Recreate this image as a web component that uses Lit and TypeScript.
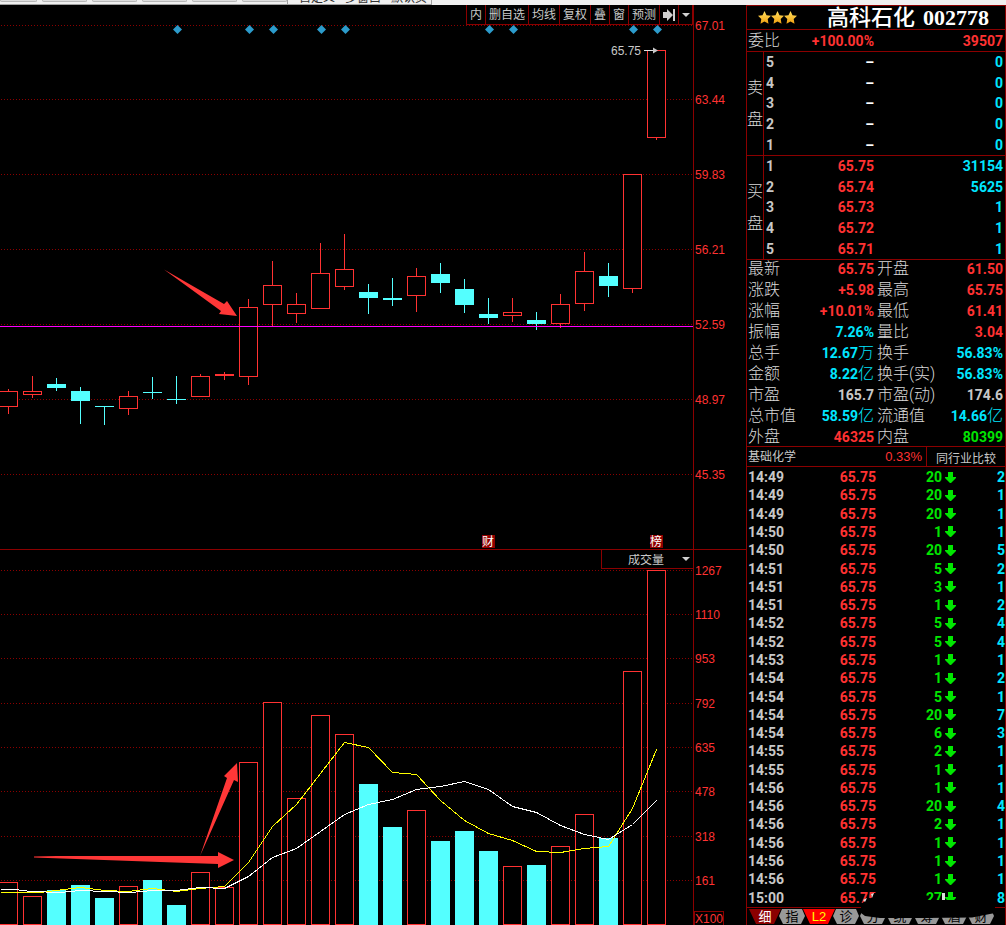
import { LitElement, html, svg, css } from "lit";
import { customElement } from "lit/decorators.js";
import { classMap } from "lit/directives/class-map.js";

type Candle = [high: number, top: number, bottom: number, low: number, up: 0 | 1, volTop: number];

/* One entry per trading day: wick and body rows of the price pane, then the top of the volume bar. */
const CANDLES: Candle[] = [
  [389, 391, 407, 414, 1, 882],
  [376, 391, 395, 398, 1, 896],
  [378, 384, 388, 391, 0, 890],
  [387, 391, 401, 424, 0, 885],
  [406, 406, 407, 425, 0, 898],
  [391, 396, 409, 415, 1, 886],
  [377, 392, 393, 399, 0, 880],
  [376, 399, 400, 404, 0, 905],
  [374, 376, 397, 397, 1, 872],
  [372, 374, 376, 380, 1, 887],
  [299, 307, 377, 385, 1, 762],
  [261, 285, 305, 326, 1, 702],
  [293, 304, 314, 323, 1, 798],
  [243, 273, 309, 309, 1, 715],
  [234, 269, 287, 290, 1, 734],
  [284, 292, 298, 314, 0, 784],
  [278, 298, 300, 306, 0, 827],
  [268, 276, 296, 312, 1, 810],
  [263, 274, 283, 293, 0, 841],
  [279, 289, 305, 313, 0, 831],
  [298, 314, 318, 324, 0, 851],
  [298, 312, 316, 322, 1, 866],
  [312, 320, 324, 330, 0, 865],
  [294, 304, 324, 328, 1, 846],
  [252, 271, 304, 311, 1, 814],
  [263, 276, 286, 297, 0, 838],
  [174, 174, 289, 293, 1, 671],
  [50, 50, 138, 140, 1, 570],
];

const PRICE_GRID: [number, string][] = [
  [25, "67.01"], [99, "63.44"], [174, "59.83"], [249, "56.21"],
  [324, "52.59"], [399, "48.97"], [474, "45.35"],
];
const VOLUME_GRID: [number, string][] = [
  [570, "1267"], [614, "1110"], [658, "953"], [703, "792"],
  [747, "635"], [791, "478"], [836, "318"], [880, "161"],
];
const EVENTS = [177, 249, 273, 321, 345, 489, 513, 633, 657];

const MA5 =
  "0,892 40,892 55,890 80,887 104,890 128,891 152,888 176,891 200,888 224,886 248,862 272,826 296,804 320,773 344,742 368,747 392,772 416,774 440,800 464,820 488,833 512,840 536,851 560,852 584,848 608,846 632,808 656,749";
const MA10 =
  "0,889 15,889 30,891 60,892 80,890 104,891 130,892 152,890 176,890 200,887 224,888 248,876 272,857 296,848 320,831 344,814 368,804 392,799 416,789 440,786 464,781 488,789 512,806 536,812 560,825 584,834 608,839 632,824 656,800";

const TOOLS = ["内", "删自选", "均线", "复权", "叠", "窗", "预测"];

const SELL = [["5", "–", "0"], ["4", "–", "0"], ["3", "–", "0"], ["2", "–", "0"], ["1", "–", "0"]];
const BUY = [
  ["1", "65.75", "31154"], ["2", "65.74", "5625"], ["3", "65.73", "1"],
  ["4", "65.72", "1"], ["5", "65.71", "1"],
];

type Stat = [label: string, value: string, unit: string, tone: string];
const STATS: Stat[] = [
  ["最新", "65.75", "", "red"], ["开盘", "61.50", "", "red"],
  ["涨跌", "+5.98", "", "red"], ["最高", "65.75", "", "red"],
  ["涨幅", "+10.01%", "", "red"], ["最低", "61.41", "", "red"],
  ["振幅", "7.26%", "", "cyan"], ["量比", "3.04", "", "red"],
  ["总手", "12.67", "万", "cyan"], ["换手", "56.83%", "", "cyan"],
  ["金额", "8.22", "亿", "cyan"], ["换手(实)", "56.83%", "", "cyan"],
  ["市盈", "165.7", "", "plain"], ["市盈(动)", "174.6", "", "plain"],
  ["总市值", "58.59", "亿", "cyan"], ["流通值", "14.66", "亿", "cyan"],
  ["外盘", "46325", "", "red"], ["内盘", "80399", "", "green"],
];

const TRADES: [string, number, number][] = [
  ["14:49", 20, 2], ["14:49", 20, 1], ["14:49", 20, 1], ["14:50", 1, 1],
  ["14:50", 20, 5], ["14:51", 5, 2], ["14:51", 3, 1], ["14:51", 1, 2],
  ["14:52", 5, 4], ["14:52", 5, 4], ["14:53", 1, 1], ["14:54", 1, 2],
  ["14:54", 5, 1], ["14:54", 20, 7], ["14:54", 6, 3], ["14:55", 2, 1],
  ["14:55", 1, 1], ["14:56", 1, 1], ["14:56", 20, 4], ["14:56", 2, 1],
  ["14:56", 1, 1], ["14:56", 1, 1], ["14:56", 1, 1], ["15:00", 27, 8],
];

const TABS = ["细", "指", "L2", "诊", "分", "统", "筹", "酒", "财"];

const shared = css`
  :host {
    display: block;
    box-sizing: border-box;
  }
  *,
  *::before {
    box-sizing: border-box;
  }
  button,
  select {
    margin: 0;
    border: 0;
    padding: 0;
    border-radius: 0;
    background: none;
    color: inherit;
    font: inherit;
    appearance: none;
    cursor: pointer;
  }
`;

const gridLine = (y: number) =>
  svg`<line class="grid" x1="1" x2="100%" y1=${y + 0.5} y2=${y + 0.5}></line>`;

@customElement("chart-panel")
export class ChartPanel extends LitElement {
  static styles = [
    shared,
    css`
      :host {
        font: 12px/12px "Liberation Sans", "Noto Sans CJK SC", sans-serif;
        color: #c8c8c8;
      }
      .pane {
        display: flex;
      }
      .price {
        border-bottom: 1px solid #8b0000;
      }
      .plot {
        position: relative;
        flex: 1;
        min-width: 0;
        overflow: hidden;
      }
      .axis {
        width: 53px;
        border-left: 1px solid #8b0000;
        flex: none;
      }
      svg {
        display: block;
        width: 100%;
      }
      .price svg.canvas {
        height: 544px;
      }
      .volume svg.canvas {
        height: 375px;
      }
      .grid {
        stroke: #8b0000;
        stroke-dasharray: 1 2;
        shape-rendering: crispEdges;
      }
      .up {
        fill: #000;
        stroke: #ff3232;
        shape-rendering: crispEdges;
      }
      .down {
        fill: #54ffff;
        stroke: none;
        shape-rendering: crispEdges;
      }
      .wick-up {
        fill: #ff3232;
      }
      .wick-down {
        fill: #54ffff;
      }
      .cost {
        fill: #ff00ff;
      }
      .event {
        fill: #2c9bcb;
      }
      .ma5,
      .ma10 {
        fill: none;
        stroke: #ffff00;
        shape-rendering: crispEdges;
      }
      .ma10 {
        stroke: #fff;
      }
      .pointer {
        fill: #ff3737;
      }
      .tick {
        fill: #ff3232;
      }
      .note {
        fill: #c8c8c8;
      }
      .note-line {
        stroke: #e0e0e0;
      }
      .flag {
        fill: #900000;
      }
      .flag-text {
        fill: #fff;
      }
      .box {
        fill: none;
        stroke: #8b0000;
      }
      .tools {
        position: absolute;
        top: 0;
        right: 0;
        display: flex;
        height: 20px;
        background: #000;
        border-right: 1px solid #8b0000;
        border-bottom: 1px solid #8b0000;
      }
      .tools button {
        display: flex;
        align-items: center;
        padding: 1px 3px 0;
        border-left: 1px solid #8b0000;
        white-space: nowrap;
      }
      .tools svg {
        width: 12px;
        height: 12px;
      }
      .tools .more {
        padding: 0 2px;
      }
      .tools .more svg {
        width: 9px;
      }
      .picker {
        position: absolute;
        top: 0;
        right: 0;
        width: 92px;
        height: 19px;
        background: #000;
        border-left: 1px solid #8b0000;
        border-bottom: 1px solid #8b0000;
      }
      .picker select {
        width: 100%;
        height: 100%;
        padding: 2px 0 0 26px;
      }
      .picker svg {
        position: absolute;
        top: 6px;
        right: 3px;
        width: 9px;
        height: 6px;
        pointer-events: none;
      }
    `,
  ];

  private candle([high, top, bottom, low, up]: Candle, i: number) {
    const x = 8 + i * 24;
    return svg`
      <rect class=${up ? "wick-up" : "wick-down"} x=${x} y=${high} width="1" height=${low - high}></rect>
      ${up
        ? svg`<rect class="up" x=${x - 8.5} y=${top + 0.5} width="18" height=${bottom - top - 1}></rect>`
        : svg`<rect class="down" x=${x - 9} y=${top} width="19" height=${bottom - top}></rect>`}`;
  }

  private bar(c: Candle, i: number) {
    const x = 8 + i * 24;
    const top = c[5];
    return c[4]
      ? svg`<rect class="up" x=${x - 8.5} y=${top + 0.5} width="18" height=${924 - top}></rect>`
      : svg`<rect class="down" x=${x - 9} y=${top} width="19" height=${925 - top}></rect>`;
  }

  render() {
    return html`
      <section class="pane price">
        <div class="plot">
          <svg class="canvas" role="img" aria-label="K线图">
            <g transform="translate(0 -5)">
              ${PRICE_GRID.map(([y]) => gridLine(y))}
              ${CANDLES.map((c, i) => this.candle(c, i))}
              <rect class="cost" x="0" y="326" width="100%" height="1"></rect>
              ${EVENTS.map((x) => svg`<path class="event" d="M${x + 0.5} 25l4.5 4.5-4.5 4.5-4.5-4.5z"></path>`)}
              <text class="note" x="611" y="55">65.75</text>
              <path class="note-line" d="M644 50.5h10"></path>
              <path class="note" d="M653 47.5l5 3-5 3z"></path>
              <rect class="flag" x="482" y="535" width="13" height="13"></rect>
              <text class="flag-text" x="482" y="546">财</text>
              <rect class="flag" x="650" y="535" width="13" height="13"></rect>
              <text class="flag-text" x="650" y="546">榜</text>
              <path class="pointer" d="M164 269.500L224 304L227 301L237 316L219 314L221 311Z"></path>
            </g>
          </svg>
          <nav class="tools">
            ${TOOLS.map((t) => html`<button type="button">${t}</button>`)}
            <button type="button" aria-label="移到最后">
              <svg viewBox="0 0 12 12"><path fill="#d0d0d0" d="M0 3h4V0l6 6-6 6V9H0zM10 0h2v12h-2z" /></svg>
            </button>
            <button type="button" class="more" aria-label="更多">
              <svg viewBox="0 0 9 12"><path fill="#d0d0d0" d="M1 4h8L5 8z" /></svg>
            </button>
          </nav>
        </div>
        <div class="axis">
          <svg class="canvas">
            ${PRICE_GRID.map(([y, t]) => svg`<text class="tick" x="1" y=${y}>${t}</text>`)}
          </svg>
        </div>
      </section>
      <section class="pane volume">
        <div class="plot">
          <svg class="canvas" role="img" aria-label="成交量图">
            <g transform="translate(0 -550)">
              ${VOLUME_GRID.map(([y]) => gridLine(y))}
              ${CANDLES.map((c, i) => this.bar(c, i))}
              <g transform="translate(0.5 0.5)">
                <polyline class="ma5" points=${MA5}></polyline>
                <polyline class="ma10" points=${MA10}></polyline>
              </g>
              <path class="pointer" d="M200 856L227 778L224 776L237 763L238 782L234 780Z"></path>
              <path class="pointer" d="M34 856.500L57 856L218 856L218 852L234 860L218 868L218 864L160 862L34 857.500Z"></path>
            </g>
          </svg>
          <div class="picker">
            <select aria-label="指标">
              <option>成交量</option>
            </select>
            <svg viewBox="0 0 9 6"><path fill="#d0d0d0" d="M1 1h8L5 5z" /></svg>
          </div>
        </div>
        <div class="axis">
          <svg class="canvas">
            <g transform="translate(0 -550)">
              ${VOLUME_GRID.map(([y, t]) => svg`<text class="tick" x="1" y=${y + 5}>${t}</text>`)}
              <rect class="box" x="0.5" y="911.5" width="29" height="15"></rect>
              <text class="tick" x="1" y="923">X100</text>
            </g>
          </svg>
        </div>
      </section>
    `;
  }
}

@customElement("quote-panel")
export class QuotePanel extends LitElement {
  static styles = [
    shared,
    css`
      :host {
        position: relative;
        border: 1px solid #8b0000;
        border-width: 0 1px;
        color: #c8c8c8;
        font: bold 14px/16px Roboto, "Noto Sans CJK SC", sans-serif;
      }
      .head {
        display: flex;
        align-items: center;
        gap: 30px;
        height: 24px;
        padding-left: 11px;
        border-top: 1px solid #8b0000;
      }
      .head svg {
        width: 39px;
        height: 13px;
        flex: none;
      }
      h1 {
        display: flex;
        gap: 8px;
        margin: 0;
        color: #fff;
        font: bold 22px/22px "Liberation Serif", "Noto Sans CJK SC", serif;
        white-space: nowrap;
      }
      .cn {
        font-weight: 500;
      }
      .red {
        color: #ff3232;
      }
      .cyan {
        color: #00e6ff;
      }
      .green {
        color: #00e600;
      }
      .label,
      .unit {
        font-size: 16px;
        font-weight: 300;
      }
      .label {
        color: #d8d8d8;
      }
      .ratio {
        display: grid;
        grid-template-columns: 126px 1fr;
        gap: 3px;
        align-items: center;
        height: 22px;
        padding: 0 2px 0 1px;
        border-top: 1px solid #8b0000;
      }
      .pair {
        display: flex;
        justify-content: space-between;
        align-items: center;
        margin: 0;
      }
      .pair dd {
        margin: 0;
        display: flex;
        align-items: center;
      }
      .end {
        text-align: right;
      }
      table {
        width: 100%;
        border-collapse: collapse;
      }
      td,
      th {
        padding: 0;
        text-align: right;
      }
      .book {
        border-top: 1px solid #8b0000;
      }
      .book table {
        height: 103px;
        border-collapse: separate;
        border-spacing: 0;
      }
      .side {
        width: 17px;
        border-right: 1px solid #8b0000;
      }
      .side span {
        display: block;
        color: #d8d8d8;
        font-size: 16px;
        line-height: 16px;
        font-weight: 300;
        text-align: center;
      }
      .side span + span {
        margin-top: 16px;
      }
      .book .level {
        width: 14px;
        padding-left: 2px;
        text-align: left;
      }
      .book .price {
        width: 96px;
      }
      .book .qty {
        padding-right: 2px;
      }
      .white {
        color: #fff;
      }
      .stats {
        display: grid;
        grid-template-columns: 126px 1fr;
        grid-auto-rows: 21px;
        column-gap: 3px;
        align-content: center;
        height: 187px;
        padding: 0 2px 0 1px;
        border-top: 1px solid #8b0000;
      }
      .sector {
        display: flex;
        align-items: stretch;
        height: 20px;
        border-top: 1px solid #8b0000;
        font-size: 12px;
        line-height: 21px;
        font-weight: 400;
      }
      .sector a {
        flex: 1;
        display: flex;
        justify-content: space-between;
        padding: 0 4px 0 1px;
        color: inherit;
        text-decoration: none;
      }
      .sector .rate {
        font: 13px/19px "Liberation Sans", sans-serif;
      }
      .sector button {
        width: 79px;
        padding-top: 2px;
        border-left: 1px solid #8b0000;
      }
      .trades {
        padding-top: 1px;
        border-top: 1px solid #8b0000;
      }
      .trades table {
        height: 439px;
      }
      .trades .time {
        width: 45px;
        padding-left: 1px;
        text-align: left;
      }
      .trades .price {
        width: 84px;
      }
      .trades .lots {
        width: 66px;
      }
      .trades .dir {
        width: 15px;
      }
      .trades .dir svg {
        display: block;
        width: 11px;
        height: 11px;
        margin-left: 3px;
      }
      .tabs {
        display: flex;
        height: 18px;
        padding: 1px 0 1px 2px;
        border-top: 1px solid #8b0000;
        overflow: hidden;
      }
      .tabs button {
        width: 32px;
        flex: none;
        margin-right: -5px;
        padding-top: 1px;
        background: #999;
        color: #000;
        font-size: 13px;
        line-height: 14px;
        font-weight: 400;
        clip-path: polygon(6px 0, 26px 0, 29px 7px, 25px 100%, 7px 100%, 3px 7px);
      }
      .tabs .current,
      .tabs .level2 {
        clip-path: polygon(0 0, 100% 0, 25px 100%, 7px 100%);
      }
      .tabs .current {
        background: #8b0000;
        color: #fff;
      }
      .tabs .level2 {
        background: #ff0000;
        color: #ffff00;
        font: 13px/14px "Liberation Sans", sans-serif;
      }
      .smudge {
        position: absolute;
        right: 0;
        bottom: 0;
        width: 145px;
        height: 32px;
      }
    `,
  ];

  private book(side: string[], rows: string[][], tone: string) {
    return html`
      <section class="book">
        <table>
          ${rows.map(
            (r, i) => html`
              <tr>
                ${i === 0
                  ? html`<th class="side" rowspan="5">${side.map((s) => html`<span>${s}</span>`)}</th>`
                  : null}
                <th class="level">${r[0]}</th>
                <td class="price ${tone}">${r[1]}</td>
                <td class="qty cyan">${r[2]}</td>
              </tr>
            `,
          )}
        </table>
      </section>
    `;
  }

  render() {
    const star = "M6.5 0l2 4.2 4.5.6-3.3 3.2.8 4.7-4-2.3-4 2.3.8-4.7L0 4.8l4.500-.6z";
    return html`
      <header class="head">
        <svg viewBox="0 0 39 13" role="img" aria-label="三星">
          <defs>
            <linearGradient id="gold" x2="0" y2="1">
              <stop offset="0" stop-color="#ffe060" />
              <stop offset="1" stop-color="#f0a010" />
            </linearGradient>
          </defs>
          ${[0, 13, 26].map((x) => svg`<path fill="url(#gold)" transform="translate(${x} 0)" d=${star}></path>`)}
        </svg>
        <h1><span class="cn">高科石化</span><span>002778</span></h1>
      </header>
      <section class="ratio">
        <div class="pair"><span class="label">委比</span><span class="red">+100.00%</span></div>
        <span class="end red">39507</span>
      </section>
      ${this.book(["卖", "盘"], SELL, "white")} ${this.book(["买", "盘"], BUY, "red")}
      <section class="stats">
        ${STATS.map(
          ([label, value, unit, tone]) => html`
            <dl class="pair">
              <dt class="label">${label}</dt>
              <dd class=${tone}>${value}${unit ? html`<span class="unit">${unit}</span>` : null}</dd>
            </dl>
          `,
        )}
      </section>
      <section class="sector">
        <a href="#sector"><span>基础化学</span><span class="rate red">0.33%</span></a>
        <button type="button">同行业比较</button>
      </section>
      <section class="trades">
        <table>
          ${TRADES.map(
            ([time, lots, count]) => html`
              <tr>
                <td class="time">${time}</td>
                <td class="price red">65.75</td>
                <td class="lots green">${lots}</td>
                <td class="dir">
                  <svg viewBox="0 0 11 11"><path fill="#00e600" d="M3 0h5v5h3v1L6 11H5L0 6V5h3z" /></svg>
                </td>
                <td class="cyan">${count}</td>
              </tr>
            `,
          )}
        </table>
      </section>
      <nav class="tabs">
        ${TABS.map(
          (t, i) => html`
            <button type="button" class=${classMap({ current: i === 0, level2: t === "L2" })}>${t}</button>
          `,
        )}
      </nav>
      <svg class="smudge" viewBox="0 0 145 32" aria-hidden="true">
        <path d="M1 11L5 8L11 6L14 0L60 0L66 7L135 7V20L112 24.500L60 25L20 25L5 23L1 20Z" />
        <path fill="#ddd" d="M3 7l4-2-2 4zM11 1l3-1-2 5zM82 0h3v7h-3z" />
      </svg>
    `;
  }
}

@customElement("app-root")
export class AppRoot extends LitElement {
  static styles = [
    shared,
    css`
      :host {
        min-height: 100vh;
        background: #000;
      }
      .strip {
        display: flex;
        height: 5px;
        background: #f0f0f0;
        overflow: hidden;
      }
      .slots {
        display: flex;
        gap: 5px;
        width: 287px;
        border-bottom: 1px solid #a0a0a0;
      }
      .slot {
        flex: 1;
        height: 2px;
        border: 1px solid #b8b8b8;
        border-top: 0;
        border-radius: 0 0 3px 3px;
        background: #ddd;
      }
      .slot:first-child {
        flex: none;
        width: 37px;
      }
      .views {
        display: flex;
        align-items: flex-end;
        gap: 10px;
        width: 145px;
        padding: 0 0 1px 11px;
        border: 1px solid #a0a0a0;
        border-top: 0;
        color: #333;
        font: 12px/12px "Noto Sans CJK SC", sans-serif;
        white-space: nowrap;
      }
      .main {
        display: flex;
        align-items: flex-start;
      }
      chart-panel {
        flex: 1;
        min-width: 0;
      }
      quote-panel {
        flex: none;
        width: 260px;
      }
    `,
  ];

  render() {
    return html`
      <div class="strip">
        <div class="slots">${[1, 2, 3, 4, 5, 6].map(() => html`<div class="slot"></div>`)}</div>
        <div class="views"><span>自定义</span><span>多窗口</span><span>默认页</span></div>
      </div>
      <main class="main">
        <chart-panel></chart-panel>
        <quote-panel></quote-panel>
      </main>
    `;
  }
}
